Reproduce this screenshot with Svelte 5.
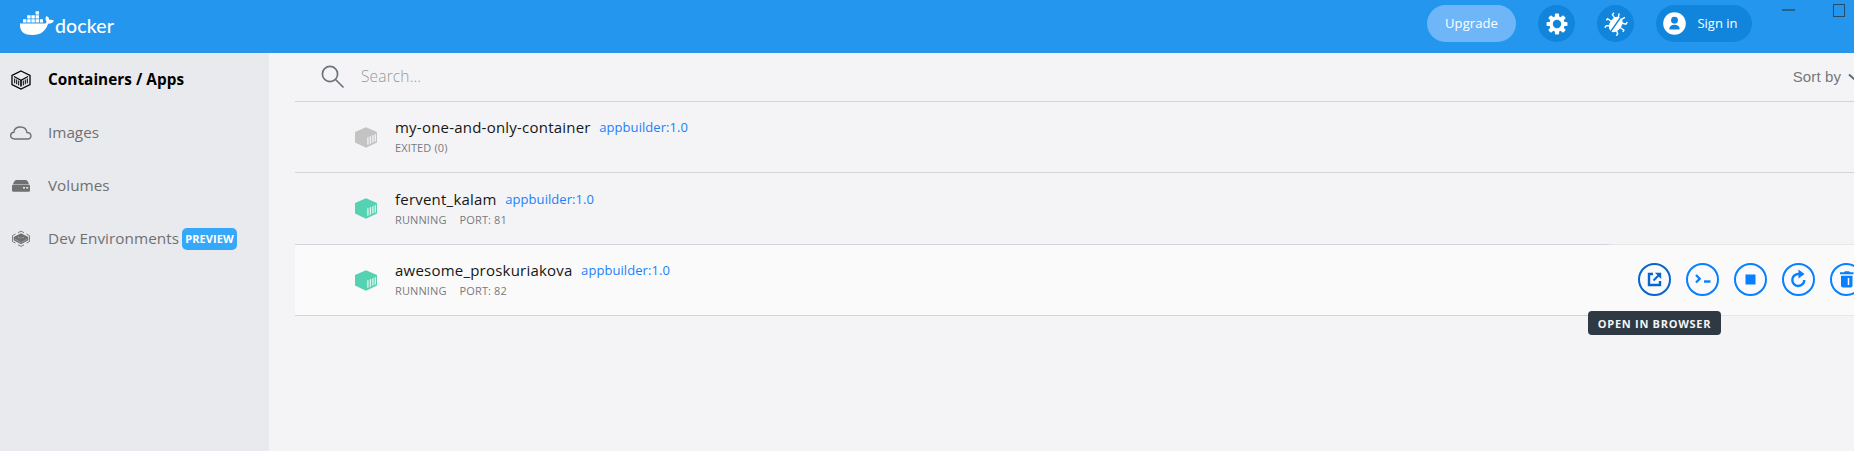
<script>
  const nav = [
    { id: 'containers', label: 'Containers / Apps', active: true, width: 136 },
    { id: 'images', label: 'Images', width: 51 },
    { id: 'volumes', label: 'Volumes', width: 61.5 },
    { id: 'dev', label: 'Dev Environments', preview: true, width: 131 },
  ];
  const rows = [
    { name: 'my-one-and-only-container', status: 'EXITED (0)', running: false },
    { name: 'fervent_kalam', status: 'RUNNING', port: 'PORT: 81', running: true },
    { name: 'awesome_proskuriakova', status: 'RUNNING', port: 'PORT: 82', running: true, hover: true },
  ];
  const actions = ['open', 'cli', 'stop', 'restart', 'delete'];
</script>

<div class="window">
  <header>
    <div class="brand">
      <svg width="35" height="26" viewBox="0 0 35 26" fill="#fff">
        <path d="M0 12.500H25.200C26.800 12.200 26.800 10.500 25.700 8.800C25.200 7.700 25.700 6 26.700 5C28.500 6.200 29.300 7.400 29.200 8.800C31.200 8.400 32.800 8.800 34 9.800C33 11.900 31 12.800 28.100 12.800C25.400 20.300 20.700 24 12.500 24C4.600 24 0 21 0 14Z" />
        <path d="M3 8.200h3.400v3.200H3zM7.200 8.200h3.400v3.200H7.200zM11.400 8.200h3.400v3.200h-3.400zM15.600 8.200h3.400v3.200h-3.400zM19.800 8.200h3.200v3.200h-3.200zM7.200 4.300h3.400v3.100H7.200zM11.400 4.300h3.400v3.100h-3.400zM15.600 4.300h3.400v3.100h-3.400zM15.600 .3h3.400v3.100h-3.400z" />
      </svg>
      <span class="wordmark">docker</span>
    </div>
    <div class="tools">
      <button class="upgrade">Upgrade</button>
      <button class="round" aria-label="Settings">
        <svg width="22" height="22" viewBox="0 0 22 22">
          <g fill="#fff">
            {#each [0, 45, 90, 135] as a}
              <rect x="8.900" y=".5" width="4.200" height="21" rx="1" transform="rotate({a} 11 11)" />
            {/each}
            <circle cx="11" cy="11" r="7.700" />
          </g>
          <circle cx="11" cy="11" r="4.200" fill="#1184dc" />
        </svg>
      </button>
      <button class="round" aria-label="Troubleshoot">
        <svg width="24" height="24" viewBox="0 0 24 24">
          <g transform="rotate(35 12 12)">
            <g stroke="#fff" stroke-width="1.400" fill="none">
              <path d="M8 8L3.800 6.500V4M7 12.500H2v2M8 17l-3 2v2.500M16 8l4.200-1.500V4M17 12.500h5v2M16 17l3 2v2.500M10 5L8.500 1.500M14 5l1.500-3.500" />
            </g>
            <ellipse cx="12" cy="12.500" rx="6" ry="8.400" fill="#fff" />
            <path d="M12 3v19" stroke="#1184dc" stroke-width="1.500" />
          </g>
        </svg>
      </button>
      <button class="signin">
        <svg width="23" height="23" viewBox="0 0 23 23">
          <circle cx="11.500" cy="11.500" r="11.300" fill="#fff" />
          <circle cx="11.500" cy="8.200" r="3.400" fill="#1184dc" />
          <path d="M6.500 17.500v-1.300c0-2.200 2.300-3.400 5-3.400s5 1.200 5 3.400v1.300z" fill="#1184dc" />
        </svg>
        <span>Sign in</span>
      </button>
      <div class="controls">
        <i class="min"></i>
        <i class="max"></i>
      </div>
    </div>
  </header>

  <div class="body">
    <nav>
      {#each nav as item}
        <a class:active={item.active} href="#{item.id}">
          <svg width="22" height="22" viewBox="0 0 22 22" fill="none" stroke="currentColor">
            {#if item.id === 'containers'}
              <path d="M11 2l9 4.300v9.400L11 20l-9-4.300V6.300z" stroke-width="1.300" />
              <path d="M4 7.500l7 3.800 7-3.800" stroke-width="1.100" />
              <path d="M4.700 9.500v4.800M6.700 10.500v4.800M8.700 11.600v4.800M13.300 11.600v4.800M15.300 10.500v4.800M17.300 9.500v4.800" stroke-width="1" />
              <path d="M11 11.300v6.200" stroke-width="1.600" />
            {:else if item.id === 'images'}
              <path d="M4.500 17C-.6 16.600-.4 10.600 3.900 10.300C4.200 6.600 7 5 10.500 5C14 5 16.400 7 17 10.500C21.600 10.400 22.500 16.400 18 17Z" stroke-width="1.400" />
            {:else if item.id === 'volumes'}
              <path d="M6.200 5h9.600q1.200 0 2 1.500L19 9H3l1.200-2.500Q5 5 6.200 5z" fill="currentColor" stroke="none" />
              <rect x="2" y="9.500" width="18" height="7.200" rx="1.500" fill="currentColor" stroke="none" />
              <path d="M13 12.700h2M16.200 12.700h2" stroke="#e9eaee" stroke-width="1.600" />
            {:else}
              <path d="M11 5.200l7.300 3.800v3.200L11 16.300l-7.300-4.100V9z" fill="currentColor" stroke="none" />
              <path d="M8 4.700l3-1.600 3 1.600M5.500 6L2.500 7.700v5.800L5.500 15M16.500 6l3 1.700v5.800l-3 1.500M8 16.800l3 1.600 3-1.600" stroke-width=".9" />
              <path d="M5 11.200l6 3.300 6-3.300M8 9l2.500 1.400M11.500 9.500h2.500" stroke="#b5b6b9" stroke-width=".6" />
            {/if}
          </svg>
          <svg class="label" width={Math.ceil(item.width)} height="24">
            <text x="0" y="17" textLength={item.width} lengthAdjust="spacing">{item.label}</text>
          </svg>
          {#if item.preview}<span class="preview">PREVIEW</span>{/if}
        </a>
      {/each}
    </nav>

    <main>
      <div class="search">
        <svg width="24" height="24" viewBox="0 0 24 24" fill="none" stroke="#6c757d" stroke-width="1.700">
          <circle cx="9" cy="9" r="7.600" />
          <path d="M14.500 14.500L22.500 22.500" />
        </svg>
        <span class="placeholder">Search...</span>
        <span class="sort">Sort by</span>
        <svg width="12" height="8" viewBox="0 0 12 8" fill="none" stroke="#5f676f" stroke-width="2"><path d="M1 1.500l5 4.500 5-4.500" /></svg>
      </div>
      {#each rows as row, i}
        <div class="row" class:hover={row.hover} class:first={i === 0}>
          <svg class="box" width="22" height="21" viewBox="0 0 22 21">
            <path d="M11 .3L22 5v10.500L11 20.700 0 15.500V5z" fill={row.running ? '#55d2b1' : '#c3c3c3'} />
            <path d="M12.900 10.300v7.400M15.400 9.300v7.400M17.900 8.200v7.400M20.300 7.200v7.200" stroke={row.running ? '#d5f5ec' : '#f0f0f0'} stroke-width="1.400" />
          </svg>
          <div class="info">
            <div class="title"><span class="name">{row.name}</span><span class="image">appbuilder:1.0</span></div>
            <div class="meta"><span>{row.status}</span>{#if row.port}<span>{row.port}</span>{/if}</div>
          </div>
          {#if row.hover}
            <div class="actions">
              {#each actions as action}
                <button class:focus={action === 'open'} aria-label={action}>
                  <svg width="33" height="33" viewBox="0 0 33 33" fill="none" stroke="currentColor">
                    <circle cx="16.500" cy="16.500" r="15.500" stroke-width="2" />
                    {#if action === 'open'}
                      <path d="M15 11h-4v11h11v-4" stroke-width="2.400" />
                      <path d="M15.500 17.500l5.500-5.500" stroke-width="1.900" />
                      <path d="M17 9.700h6.200v6.200z" fill="currentColor" stroke="none" />
                    {:else if action === 'cli'}
                      <path d="M10 12l3.700 3.800L10 19.500" stroke-width="2.300" />
                      <path d="M18 18.500h6.500" stroke-width="2.400" />
                    {:else if action === 'stop'}
                      <rect x="11.500" y="11.500" width="10" height="10" fill="currentColor" stroke="none" />
                    {:else if action === 'restart'}
                      <path d="M17.500 11H16a6 6 0 1 0 6.300 6" stroke-width="2.400" />
                      <path d="M16.500 6.500l6 4.500-6 4.500z" fill="currentColor" stroke="none" />
                    {:else}
                      <path d="M10 9.300h4l1-1h4l1 1h3.500v2H10zM11 12.800h11.500v9.700q0 2-2 2H13q-2 0-2-2z" fill="currentColor" stroke="none" />
                      <path d="M18.500 15v7" stroke="#fafafa" stroke-width="1.500" />
                    {/if}
                  </svg>
                </button>
              {/each}
            </div>
            <div class="tooltip">OPEN IN BROWSER</div>
          {/if}
        </div>
      {/each}
    </main>
  </div>
</div>

<style>
  :global(body) { overflow: hidden; }
  * { box-sizing: border-box; }
  .window { width: 1854px; height: 451px; overflow: hidden; display: flex; flex-direction: column; font-family: "Open Sans", sans-serif; background: #f4f4f6; }
  button { border: 0; padding: 0; font-family: inherit; background: none; display: flex; align-items: center; justify-content: center; }
  svg { display: block; flex: none; }
  header { height: 53px; flex: none; background: #2496ed; display: flex; justify-content: space-between; padding-left: 20px; }
  .brand { display: flex; padding-top: 11px; }
  .wordmark { color: #fff; font: 500 19.500px/24px Lato, sans-serif; margin-top: 3px; letter-spacing: .1px; }
  .tools { display: flex; padding-top: 5px; color: #fff; font-size: 13px; }
  .upgrade { width: 89px; height: 37px; border-radius: 19px; background: #6eb6f7; color: #fff; font-size: 13px; font-weight: 500; letter-spacing: .1px; margin-right: 22px; padding-bottom: 1px; }
  .round { width: 37px; height: 37px; border-radius: 50%; background: #1184dc; margin-right: 22px; }
  .signin { width: 96px; height: 37px; border-radius: 19px; background: #1184dc; color: #fff; font-size: 13px; font-weight: 500; gap: 11px; padding-right: 7px; }
  .signin span { padding-bottom: 1px; }
  .controls { display: flex; width: 102px; padding-left: 30px; }
  .min { width: 13px; height: 2px; background: #23648f; margin: 4px 38px 0 0; }
  .max { width: 12px; height: 13px; border: 1px solid #274c68; margin-top: -1px; }
  .body { flex: 1; display: flex; min-height: 0; }
  nav { width: 269px; flex: none; background: #e9eaee; }
  nav a { height: 53px; display: flex; align-items: center; padding-left: 10px; color: #707070; text-decoration: none; }
  nav a.active { color: #000; }
  .label { margin-left: 16px; overflow: visible; }
  .label text { font-size: 15.300px; fill: currentColor; }
  .active .label text { font-weight: 700; }
  .preview { width: 55px; height: 22px; margin-left: 3px; border-radius: 5px; background: #36a8fa; color: #fff; font-size: 11px; line-height: 22px; font-weight: 700; text-align: center; letter-spacing: .1px; }
  main { flex: 1; min-width: 0; padding-left: 26px; }
  .search { height: 49px; border-bottom: 1px solid #d2d4d9; display: flex; align-items: center; padding-left: 26px; }
  .placeholder { color: #97979a; font-size: 15.500px; font-weight: 300; margin: 0 0 2px 16px; letter-spacing: .15px; }
  .sort { margin: 0 0 2px auto; color: #73787d; font: 15px "Liberation Sans", sans-serif; letter-spacing: .1px; }
  .sort + svg { margin: 0 -6px 0 7px; }
  .row { height: 71px; border-bottom: 1px solid #d2d4d9; display: flex; position: relative; padding-left: 60px; }
  .row:nth-child(3) { height: 72px; }
  .row.hover { background: #fafafa; }
  .row.hover::after { content: ""; position: absolute; z-index: 0; right: 0; top: -1px; bottom: -1px; width: 249px; background: linear-gradient(90deg, #fafafa00, #fafafa80 8px); }
  .box { margin-top: 25px; }
  .info { margin: 13px 0 0 18px; }
  .row:nth-child(3) .info { margin-top: 14px; }
  .title { display: flex; align-items: center; height: 23px; }
  .name { color: #161616; font-size: 15px; letter-spacing: .22px; }
  .image { color: #1a81fa; font-size: 13px; margin-left: 8.500px; letter-spacing: .07px; }
  .meta { display: flex; gap: 13px; color: #767b82; font-size: 11px; line-height: 16px; margin-top: 2px; letter-spacing: .12px; }
  .actions { display: flex; gap: 15px; margin: 18px -9px 0 auto; position: relative; z-index: 1; height: 33px; }
  .actions button { color: #087fff; }
  .actions .focus { color: #0865cc; }
  .tooltip { position: absolute; z-index: 2; left: 1293px; top: 66px; width: 133px; height: 24px; border-radius: 4px; background: #2e3943; color: #f3f5f6; font-size: 11px; line-height: 25px; font-weight: 700; text-align: center; letter-spacing: .72px; }
</style>
